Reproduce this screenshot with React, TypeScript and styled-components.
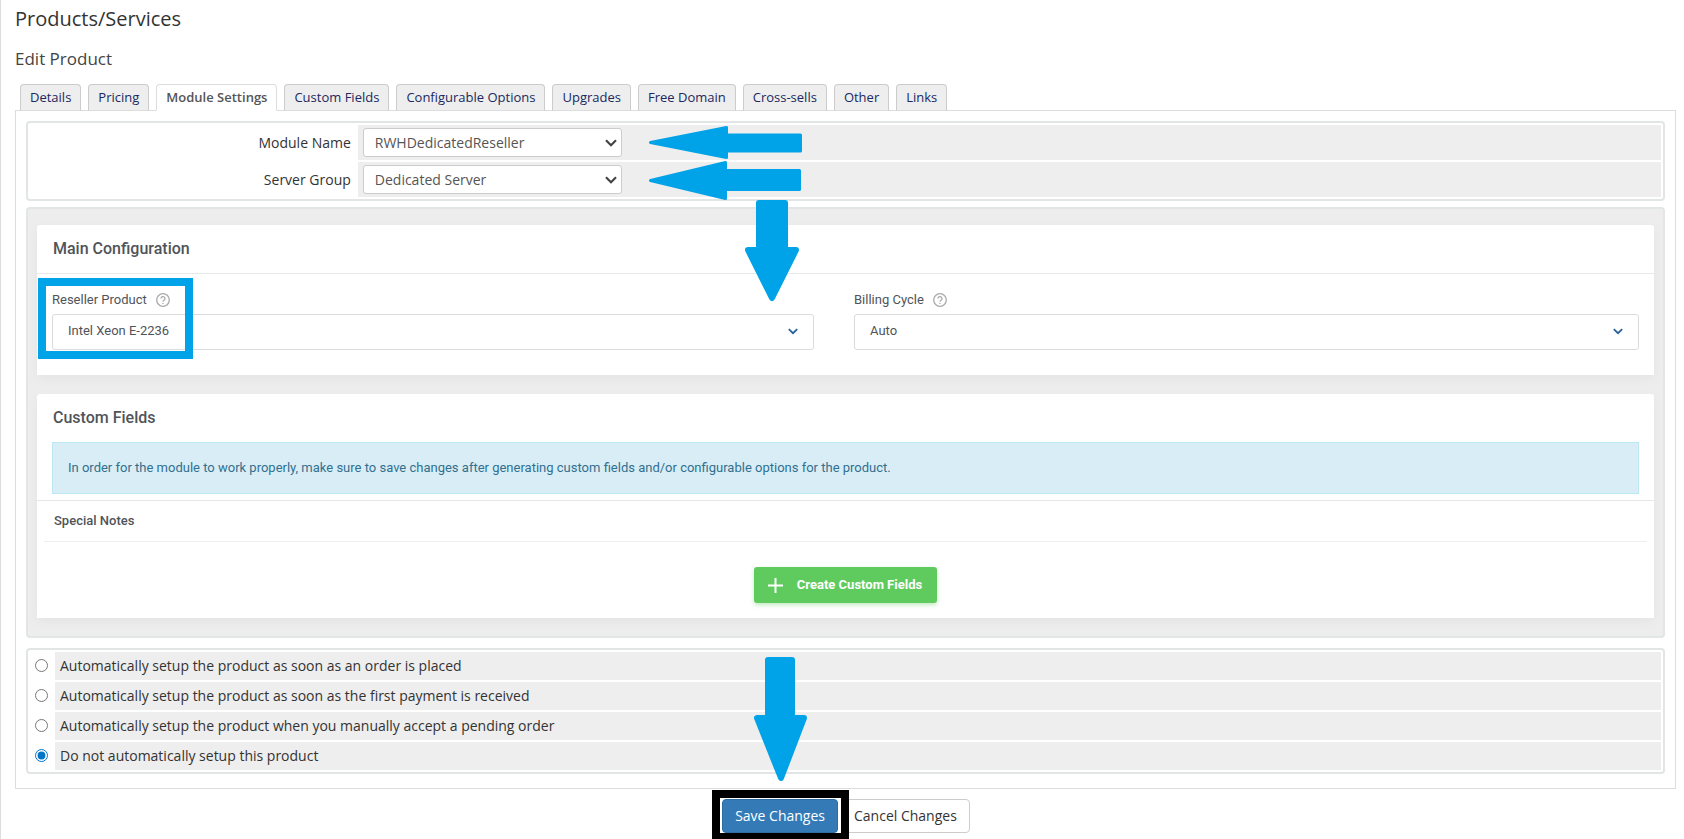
import React, { useState } from 'react';
import styled, { createGlobalStyle } from 'styled-components';

const sans = '"Open Sans", "Noto Sans", sans-serif';
const roboto = 'Roboto, "Liberation Sans", sans-serif';
const blue = '#00a2e8';

const GlobalStyle = createGlobalStyle`
  *, *::before, *::after { box-sizing: border-box; }
  body { margin: 0; background: #fff; color: #333; font: 14px/20px ${sans}; }
  h1, h2, h3, h4, ul, p { margin: 0; padding: 0; }
`;

const Page = styled.main`
  border-left: 1px solid #ddd;
  padding: 7px 8px 0 14px;
  display: flex;
  flex-direction: column;
`;

const PageTitle = styled.h1`
  font-size: 20px;
  line-height: 24px;
  font-weight: 400;
`;

const PageSubtitle = styled.h2`
  margin: 16px 0 13px;
  font-size: 17px;
  line-height: 24px;
  font-weight: 400;
  color: #444;
`;

const TabBar = styled.nav`
  display: flex;
  gap: 7px;
  padding-left: 5px;
  margin-bottom: -1px;
`;

const Tab = styled.a<{ $active?: boolean }>`
  position: relative;
  height: 27px;
  padding: 0 9px;
  border: 1px solid ${p => (p.$active ? '#ddd' : '#ccc')};
  border-bottom-color: ${p => (p.$active ? '#fff' : '#ddd')};
  border-radius: 4px 4px 0 0;
  background: ${p => (p.$active ? '#fff' : '#eee')};
  color: ${p => (p.$active ? '#555' : '#202860')};
  font-size: 13px;
  line-height: 25px;
  font-weight: ${p => (p.$active ? 600 : 400)};
  text-decoration: none;
  white-space: nowrap;
`;

const Panel = styled.section`
  border: 1px solid #ddd;
  padding: 10px 10px 14px;
`;

const FormTable = styled.table<{ $after: number }>`
  width: 100%;
  margin-bottom: ${p => p.$after}px;
  border: 2px solid #e2e5e5;
  border-radius: 4px;
  border-collapse: separate;
  border-spacing: 2px;
`;

const LabelCell = styled.th`
  width: 20%;
  padding: 0 5px;
  text-align: right;
  font-weight: 400;
`;

const FieldCell = styled.td`
  position: relative;
  padding: 3px 5px;
  background: #eee;
`;

const RadioCell = styled.td`
  width: 23px;
  padding: 0 5px 2px;
  font-size: 0;
`;

const OptionCell = styled.td`
  padding: 4px 5px;
  background: #eee;
`;

const Radio = styled.input`
  display: block;
  width: 13px;
  height: 13px;
  margin: 0;
  accent-color: #0075c8;
`;

const SelectWrap = styled.div<{ $width?: string }>`
  display: grid;
  align-items: center;
  width: ${p => p.$width ?? '100%'};
  > * { grid-area: 1 / 1; }
  > svg { justify-self: end; pointer-events: none; }
`;

const ModuleSelect = styled.select`
  appearance: none;
  width: 100%;
  height: 29px;
  padding: 0 24px 0 11px;
  border: 1px solid #ccc;
  border-radius: 3px;
  background: #fff;
  color: #555;
  font: 14px/20px ${sans};
`;

const ModuleChevron = styled.svg`
  width: 12px;
  height: 8px;
  margin-right: 5px;
`;

const ConfigArea = styled.div`
  display: flex;
  flex-direction: column;
  gap: 19px;
  margin-bottom: 10px;
  padding: 16px 9px 18px;
  border: 2px solid #e2e6e6;
  border-radius: 4px;
  background: #ededed;
  font-family: ${roboto};
  color: #505459;
`;

const Card = styled.section`
  border-radius: 3px 3px 0 0;
  background: #fff;
  box-shadow: 0 4px 12px rgba(0, 0, 0, 0.04);
`;

const CardTitle = styled.h3`
  padding: 0 16px;
  font-size: 16px;
  line-height: 48px;
  font-weight: 500;
`;

const CardBody = styled.div`
  display: grid;
  grid-template-columns: 762fr 785fr;
  gap: 40px;
  padding: 16px 15px 25px;
  border-top: 1px solid #e8eaea;
`;

const Field = styled.div`
  position: relative;
  display: flex;
  flex-direction: column;
  gap: 4px;
`;

const FieldHead = styled.div`
  display: flex;
  align-items: center;
  gap: 9px;
  font-size: 13px;
  line-height: 20px;
`;

const HelpIcon = styled.svg`
  width: 14px;
  height: 14px;
`;

const ConfigSelect = styled.select`
  appearance: none;
  width: 100%;
  height: 36px;
  padding: 0 40px 2px 15px;
  border: 1px solid #d9dbdd;
  border-radius: 3px;
  background: #fff;
  color: #505459;
  font: 13px/20px ${roboto};
`;

const ConfigChevron = styled.svg`
  width: 10px;
  height: 7px;
  margin: 0 16px 2px 0;
`;

const Notice = styled.p`
  margin: 0 15px 6px;
  padding: 15px;
  border: 1px solid #bce8f1;
  background: #d9edf7;
  color: #31708f;
  font-size: 13px;
  line-height: 20px;
`;

const NotesBlock = styled.div`
  padding: 0 7px 15px;
  border-top: 1px solid #e6e8e8;
`;

const NotesTitle = styled.h4`
  padding: 0 10px;
  border-bottom: 1px solid #eee;
  font-size: 13px;
  line-height: 40px;
  font-weight: 500;
`;

const CreateButton = styled.button`
  display: flex;
  align-items: center;
  gap: 14px;
  height: 36px;
  margin: 25px auto 0;
  padding: 0 15px 0 14px;
  border: 0;
  border-radius: 3px;
  background: #5fcb5f;
  box-shadow: 0 2px 4px rgba(95, 203, 95, 0.4);
  color: #fff;
  font: 700 13px/20px ${roboto};
`;

const PlusIcon = styled.svg`
  width: 15px;
  height: 15px;
`;

const Actions = styled.div`
  display: flex;
  justify-content: center;
  gap: 3px;
  padding: 10px 0 6px 1px;
`;

const SaveWrap = styled.div`
  position: relative;
`;

const ActionButton = styled.button<{ $primary?: boolean }>`
  height: 34px;
  padding: 0 12px;
  border: 1px solid ${p => (p.$primary ? '#2e6da4' : '#ccc')};
  border-radius: 4px;
  background: ${p => (p.$primary ? '#337ab7' : '#fff')};
  color: ${p => (p.$primary ? '#fff' : '#333')};
  font: 14px/20px ${sans};
`;

/* Tutorial annotations that lie over the form */
const SaveFrame = styled.div`
  position: absolute;
  inset: -9px -11px -6px -10px;
  border: 8px solid #000;
  border-bottom-width: 6px;
  pointer-events: none;
`;

const FieldFrame = styled.div`
  position: absolute;
  top: -12px;
  left: -14px;
  width: 155px;
  height: 81px;
  border: 8px solid ${blue};
  pointer-events: none;
`;

const Arrow = styled.svg<{ $left: string; $top: number }>`
  position: absolute;
  z-index: 1;
  left: ${p => p.$left};
  top: ${p => p.$top}px;
  overflow: visible;
  fill: ${blue};
  stroke: ${blue};
  stroke-linejoin: round;
  pointer-events: none;
`;

const tabs = ['Details', 'Pricing', 'Module Settings', 'Custom Fields', 'Configurable Options', 'Upgrades', 'Free Domain', 'Cross-sells', 'Other', 'Links'];

const setupOptions = [
  'Automatically setup the product as soon as an order is placed',
  'Automatically setup the product as soon as the first payment is received',
  'Automatically setup the product when you manually accept a pending order',
  'Do not automatically setup this product',
];

function Help() {
  return (
    <HelpIcon viewBox="0 0 14 14" fill="none" stroke="#aaa" strokeWidth="1.3" aria-hidden="true">
      <circle cx="7" cy="7" r="6.3" />
      <path d="M5 5.600a2 2 0 1 1 3 1.700c-.7.4-1 .7-1 1.500M7 9.900v1.200" />
    </HelpIcon>
  );
}

function ModuleField({ id, value }: { id: string; value: string }) {
  return (
    <SelectWrap $width="259px">
      <ModuleSelect id={id}>
        <option>{value}</option>
      </ModuleSelect>
      <ModuleChevron viewBox="0 0 12 8" fill="none" stroke="#444" strokeWidth="2.2" aria-hidden="true">
        <path d="M1 1.200l5 5 5-5" />
      </ModuleChevron>
    </SelectWrap>
  );
}

function ConfigField({ id, label, value, children }: { id: string; label: string; value: string; children?: React.ReactNode }) {
  return (
    <Field>
      <FieldHead>
        <label htmlFor={id}>{label}</label>
        <Help />
      </FieldHead>
      <SelectWrap>
        <ConfigSelect id={id}>
          <option>{value}</option>
        </ConfigSelect>
        <ConfigChevron viewBox="0 0 10 7" fill="none" stroke="#2a6099" strokeWidth="1.8" aria-hidden="true">
          <path d="M.8 1.200L5 5.200l4.200-4" />
        </ConfigChevron>
      </SelectWrap>
      {children}
    </Field>
  );
}

export default function App() {
  const [setup, setSetup] = useState(3);
  return (
    <>
      <GlobalStyle />
      <Page>
        <PageTitle>Products/Services</PageTitle>
        <PageSubtitle>Edit Product</PageSubtitle>
        <TabBar>
          {tabs.map(name => (
            <Tab key={name} href="#" $active={name === 'Module Settings'}>{name}</Tab>
          ))}
        </TabBar>
        <Panel>
          <FormTable $after={6}>
            <tbody>
              <tr>
                <LabelCell scope="row"><label htmlFor="module">Module Name</label></LabelCell>
                <FieldCell>
                  <ModuleField id="module" value="RWHDedicatedReseller" />
                  <Arrow $left="291px" $top={1} width="153" height="33" strokeWidth="3">
                    <path d="M1.500 16.500L77.500 1.500V9H151.500V25H77.500V31.500Z" />
                  </Arrow>
                </FieldCell>
              </tr>
              <tr>
                <LabelCell scope="row"><label htmlFor="group">Server Group</label></LabelCell>
                <FieldCell>
                  <ModuleField id="group" value="Dedicated Server" />
                  <Arrow $left="291px" $top={-1} width="152" height="39" strokeWidth="3">
                    <path d="M1.500 19.500L76.500 1.500V9.500H150.500V28.500H76.500V37.500Z" />
                  </Arrow>
                  <Arrow $left="387px" $top={38} width="54" height="101" strokeWidth="6">
                    <path d="M14 3H40V50H51L27 98L3 50H14Z" />
                  </Arrow>
                </FieldCell>
              </tr>
            </tbody>
          </FormTable>

          <ConfigArea>
            <Card>
              <CardTitle>Main Configuration</CardTitle>
              <CardBody>
                <ConfigField id="product" label="Reseller Product" value="Intel Xeon E-2236">
                  <FieldFrame />
                </ConfigField>
                <ConfigField id="cycle" label="Billing Cycle" value="Auto" />
              </CardBody>
            </Card>
            <Card>
              <CardTitle>Custom Fields</CardTitle>
              <Notice>
                In order for the module to work properly, make sure to save changes after generating custom fields and/or configurable options for the product.
              </Notice>
              <NotesBlock>
                <NotesTitle>Special Notes</NotesTitle>
                <CreateButton type="button">
                  <PlusIcon viewBox="0 0 15 15" stroke="#fff" strokeWidth="2" aria-hidden="true">
                    <path d="M7.500 0v15M0 7.500h15" />
                  </PlusIcon>
                  Create Custom Fields
                </CreateButton>
              </NotesBlock>
            </Card>
          </ConfigArea>

          <FormTable $after={0}>
            <tbody>
              {setupOptions.map((text, i) => (
                <tr key={text}>
                  <RadioCell>
                    <Radio type="radio" name="autosetup" id={`setup${i}`} checked={setup === i} onChange={() => setSetup(i)} />
                  </RadioCell>
                  <OptionCell><label htmlFor={`setup${i}`}>{text}</label></OptionCell>
                </tr>
              ))}
            </tbody>
          </FormTable>
        </Panel>
        <Actions>
          <SaveWrap>
            <ActionButton type="submit" $primary>Save Changes</ActionButton>
            <SaveFrame />
            <Arrow $left="32px" $top={-142} width="53" height="124" strokeWidth="6">
              <path d="M14 3H38V61H50L27 121L3 61H14Z" />
            </Arrow>
          </SaveWrap>
          <ActionButton type="button">Cancel Changes</ActionButton>
        </Actions>
      </Page>
    </>
  );
}
